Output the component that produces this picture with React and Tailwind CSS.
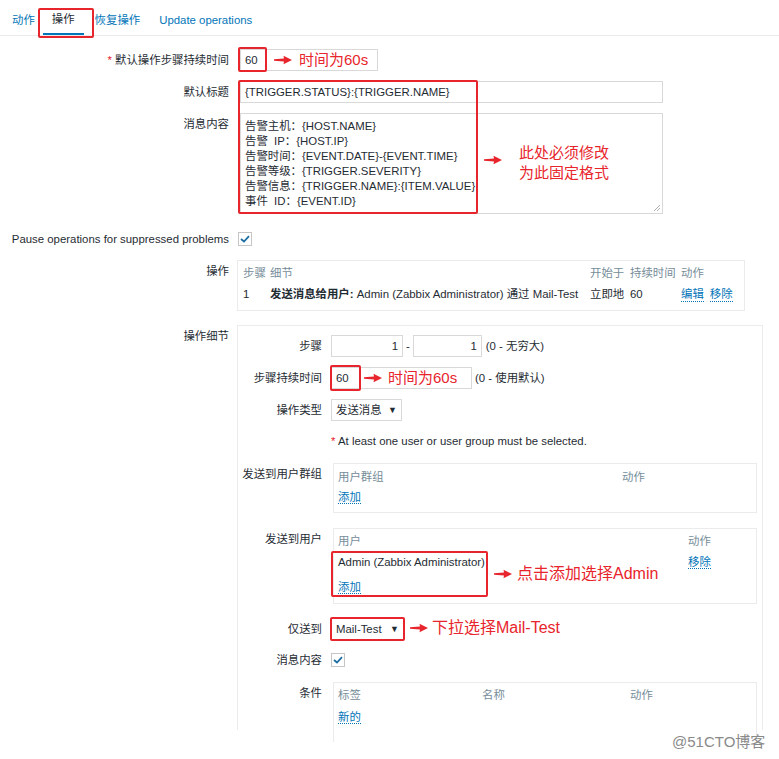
import React from "react";

const RED = "#e8242c";

function Arrow({ className }) {
  return (
    <svg width="18" height="10" viewBox="0 0 18 10" className={className}>
      <path d="M0 4.3 L10 3.6 L9.5 0.8 L18 5 L9.5 9.2 L10 6.4 L0 5.7 Z" fill={RED} />
    </svg>
  );
}

function Check() {
  return (
    <div className="w-[14px] h-[14px] border border-[#c5c5c5] bg-white flex items-center justify-center">
      <svg width="10" height="8" viewBox="0 0 10 8">
        <path d="M1 4 L4 6.5 L9 1.2" fill="none" stroke="#1c6ea4" strokeWidth="1.8" />
      </svg>
    </div>
  );
}

function Link({ children, className = "" }) {
  return (
    <span className={`text-[#0275b8] border-b border-dotted border-[#0275b8] ${className}`}>
      {children}
    </span>
  );
}

function Row({ label, children, className = "", labelClass = "leading-[22px]" }) {
  return (
    <div className={`flex ${className}`}>
      <div className={`w-[229px] shrink-0 text-right ${labelClass}`}>{label}</div>
      {children}
    </div>
  );
}

function SubRow({ label, children, className = "", labelClass = "leading-[22px]" }) {
  return (
    <div className={`flex ${className}`}>
      <div className={`w-[84px] shrink-0 text-right ${labelClass}`}>{label}</div>
      {children}
    </div>
  );
}

function Input({ className = "", children }) {
  return (
    <div className={`h-[22px] border border-[#d9d9d9] bg-white px-[4px] leading-[20px] ${className}`}>
      {children}
    </div>
  );
}

export default function App() {
  return (
    <div className="relative w-[779px] h-[759px] overflow-hidden bg-white text-[11.4px] leading-[14px] text-[#1f2c33] font-['Liberation_Sans','Noto_Sans_CJK_SC',sans-serif]">
      {/* tabs */}
      <div className="flex h-[36px] border-b border-[#ebebeb] pl-[4px]">
        <span className="flex items-center pt-[4px] px-2 text-[#0275b8]">动作</span>
        <span className="flex items-center pt-[4px] px-[9px] border-b-2 border-[#0275b8]">操作</span>
        <span className="flex items-center pt-[4px] px-2 ml-[3px] text-[#0275b8]">恢复操作</span>
        <span className="flex items-center pt-[4px] px-2 ml-[3px] text-[#0275b8]">Update operations</span>
      </div>

      <div className="pt-[13px] flex flex-col">
        <Row
          label={
            <>
              <span className="text-[#e8242c]">*</span> 默认操作步骤持续时间
            </>
          }
        >
          <Input className="ml-[11px] w-[138px]">60</Input>
        </Row>

        <Row label="默认标题" className="mt-[10px]">
          <Input className="ml-[11px] w-[423px]">{"{TRIGGER.STATUS}:{TRIGGER.NAME}"}</Input>
        </Row>

        <Row label="消息内容" className="mt-[10px]">
          <div className="relative ml-[11px] w-[423px] h-[101px] border border-[#d9d9d9] px-[4px] pt-[5px] leading-[15px]">
            <div>告警主机：{"{HOST.NAME}"}</div>
            <div>告警&nbsp; IP：{"{HOST.IP}"}</div>
            <div>告警时间：{"{EVENT.DATE}-{EVENT.TIME}"}</div>
            <div>告警等级：{"{TRIGGER.SEVERITY}"}</div>
            <div>告警信息：{"{TRIGGER.NAME}:{ITEM.VALUE}"}</div>
            <div>事件&nbsp; ID：{"{EVENT.ID}"}</div>
            <svg width="8" height="8" viewBox="0 0 8 8" className="absolute right-[1px] bottom-[1px]">
              <path d="M1 7 L7 1 M4 7 L7 4" stroke="#999" strokeWidth="0.8" />
            </svg>
          </div>
        </Row>

        <Row
          label="Pause operations for suppressed problems"
          labelClass="leading-[14px]"
          className="mt-[18px]"
        >
          <div className="ml-[9px]">
            <Check />
          </div>
        </Row>

        <Row label="操作" className="mt-[14px]">
          <div className="ml-[8px] w-[508px] h-[51px] border border-[#ebebeb] pl-[5px] pt-[5px]">
            <div className="grid grid-cols-[27px_320px_40px_51px_1fr] text-[#768d99]">
              <span>步骤</span>
              <span>细节</span>
              <span>开始于</span>
              <span>持续时间</span>
              <span>动作</span>
            </div>
            <div className="grid grid-cols-[27px_320px_40px_51px_1fr] mt-[7px]">
              <span>1</span>
              <span className="whitespace-nowrap">
                <b>发送消息给用户:</b> Admin (Zabbix Administrator) 通过 Mail-Test
              </span>
              <span>立即地</span>
              <span>60</span>
              <span className="flex gap-[6px]">
                <Link>编辑</Link>
                <Link>移除</Link>
              </span>
            </div>
          </div>
        </Row>

        <Row label="操作细节" className="mt-[14px]">
          <div className="ml-[8px] w-[526px] h-[405px] border-x border-t border-[#ebebeb] pt-[9px]">
            <SubRow label="步骤">
              <div className="ml-[9px] flex items-center">
                <Input className="w-[72px] text-right">1</Input>
                <span className="mx-[3px]">-</span>
                <Input className="w-[69px] text-right">1</Input>
                <span className="ml-[4px]">(0 - 无穷大)</span>
              </div>
            </SubRow>

            <SubRow label="步骤持续时间" className="mt-[10px]">
              <div className="ml-[9px] flex items-center">
                <Input className="w-[141px]">60</Input>
                <span className="ml-[3px]">(0 - 使用默认)</span>
              </div>
            </SubRow>

            <SubRow label="操作类型" className="mt-[10px]">
              <Input className="ml-[9px] w-[71px] flex justify-between">
                <span>发送消息</span>
                <span className="text-[9px]">▼</span>
              </Input>
            </SubRow>

            <div className="mt-[13px] ml-[93px]">
              <span className="text-[#e8242c]">*</span> At least one user or user group must be selected.
            </div>

            <SubRow label="发送到用户群组" className="mt-[15px]">
              <div className="ml-[11px] w-[424px] h-[50px] border border-[#ebebeb] pl-[4px] pt-[6px]">
                <div className="grid grid-cols-[284px_1fr] text-[#768d99]">
                  <span>用户群组</span>
                  <span>动作</span>
                </div>
                <div className="mt-[6px]">
                  <Link>添加</Link>
                </div>
              </div>
            </SubRow>

            <SubRow label="发送到用户" className="mt-[15px]">
              <div className="ml-[11px] w-[424px] h-[76px] border border-[#ebebeb] pl-[4px] pt-[5px]">
                <div className="grid grid-cols-[350px_1fr] text-[#768d99]">
                  <span>用户</span>
                  <span>动作</span>
                </div>
                <div className="grid grid-cols-[350px_1fr] mt-[7px]">
                  <span>Admin (Zabbix Administrator)</span>
                  <span>
                    <Link>移除</Link>
                  </span>
                </div>
                <div className="mt-[11px]">
                  <Link>添加</Link>
                </div>
              </div>
            </SubRow>

            <SubRow label="仅送到" className="mt-[14px]">
              <Input className="ml-[9px] w-[73px] flex justify-between">
                <span>Mail-Test</span>
                <span className="text-[9px]">▼</span>
              </Input>
            </SubRow>

            <SubRow label="消息内容" labelClass="leading-[14px]" className="mt-[13px]">
              <div className="ml-[9px]">
                <Check />
              </div>
            </SubRow>

            <SubRow label="条件" className="mt-[15px]">
              <div className="ml-[11px] w-[424px] h-[60px] border-x border-t border-[#ebebeb] pl-[4px] pt-[5px]">
                <div className="grid grid-cols-[144px_148px_1fr] text-[#768d99]">
                  <span>标签</span>
                  <span>名称</span>
                  <span>动作</span>
                </div>
                <div className="mt-[8px]">
                  <Link>新的</Link>
                </div>
              </div>
            </SubRow>
          </div>
        </Row>
      </div>

      {/* annotations */}
      <div className="absolute left-[38px] top-[8px] w-[56px] h-[30px] border-2 border-[#e8242c] rounded-[2px]" />

      <div className="absolute left-[238px] top-[47px] w-[29px] h-[25px] border-2 border-[#e8242c] rounded-[2px]" />
      <div className="absolute left-[274px] top-[50px] flex items-center gap-[7px] text-[15px] leading-[20px] text-[#e8242c]">
        <Arrow />
        <span>时间为60s</span>
      </div>

      <div className="absolute left-[238px] top-[80px] w-[240px] h-[134px] border-2 border-[#e8242c] rounded-[2px]" />
      <div className="absolute left-[484px] top-[155px]">
        <Arrow />
      </div>
      <div className="absolute left-[519px] top-[143px] text-[15px] leading-[20px] text-[#e8242c]">
        <div>此处必须修改</div>
        <div>为此固定格式</div>
      </div>

      <div className="absolute left-[330px] top-[365px] w-[31px] h-[26px] border-2 border-[#e8242c] rounded-[2px]" />
      <div className="absolute left-[364px] top-[368px] flex items-center gap-[6px] text-[15px] leading-[20px] text-[#e8242c]">
        <Arrow />
        <span>时间为60s</span>
      </div>

      <div className="absolute left-[331px] top-[551px] w-[157px] h-[46px] border-2 border-[#e8242c] rounded-[2px]" />
      <div className="absolute left-[494px] top-[563px] flex items-center gap-[5px] text-[16px] leading-[22px] text-[#e8242c]">
        <Arrow />
        <span>点击添加选择Admin</span>
      </div>

      <div className="absolute left-[330px] top-[617px] w-[75px] h-[24px] border-2 border-[#e8242c] rounded-[2px]" />
      <div className="absolute left-[410px] top-[617px] flex items-center gap-[4px] text-[16px] leading-[22px] text-[#e8242c]">
        <Arrow />
        <span>下拉选择Mail-Test</span>
      </div>

      <div className="absolute left-[672px] top-[733px] text-[15px] leading-[18px] text-[#8a8a8a]">
        @51CTO博客
      </div>
    </div>
  );
}
